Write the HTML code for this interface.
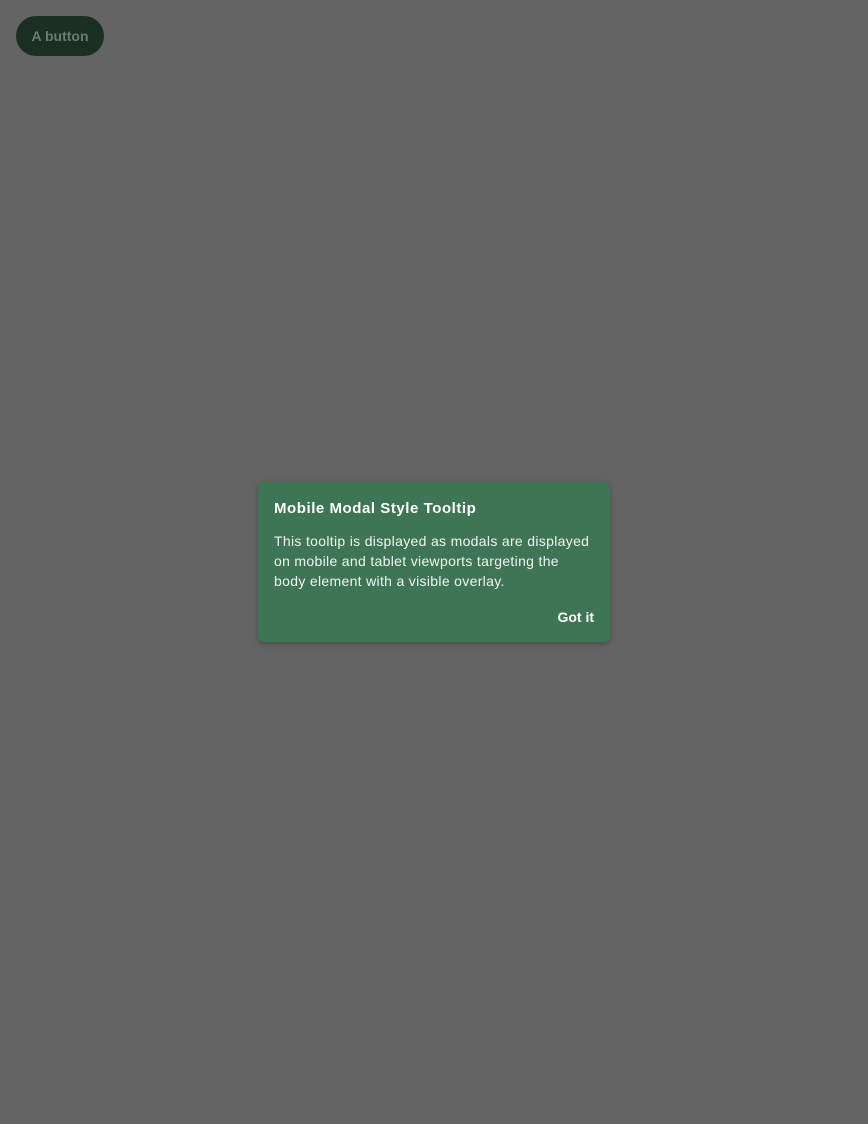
<!DOCTYPE html>
<html><head><style>
html,body{margin:0;padding:0;width:868px;height:1124px;background:#646464;font-family:"Liberation Sans",sans-serif;overflow:hidden}
.btn{position:absolute;left:16px;top:16px;width:88px;height:40px;border-radius:20px;background:#1b3023;color:#6e7a72;font-size:14px;font-weight:bold;line-height:40px;text-align:center}
.tip{position:absolute;left:258px;top:482px;width:352px;height:160px;background:#3e7554;border-radius:6px;box-shadow:0 2px 6px rgba(0,0,0,.25);color:#fff;box-sizing:border-box;padding:0 16px}
h1{margin:0;position:absolute;left:16px;top:17px;font-size:15px;font-weight:bold;line-height:20px;letter-spacing:.55px;white-space:nowrap}
p{margin:0;position:absolute;left:16px;top:49px;width:340px;font-size:14px;line-height:20px;color:#f0f4f1;letter-spacing:.32px;white-space:nowrap}
.g{position:absolute;right:16px;top:125px;font-size:14px;font-weight:bold;line-height:20px}
</style></head><body>
<div class="btn">A button</div>
<div class="tip">
<h1>Mobile Modal Style Tooltip</h1>
<p>This tooltip is displayed as modals are displayed<br>on mobile and tablet viewports targeting the<br>body element with a visible overlay.</p>
<div class="g">Got it</div>
</div>
</body></html>
